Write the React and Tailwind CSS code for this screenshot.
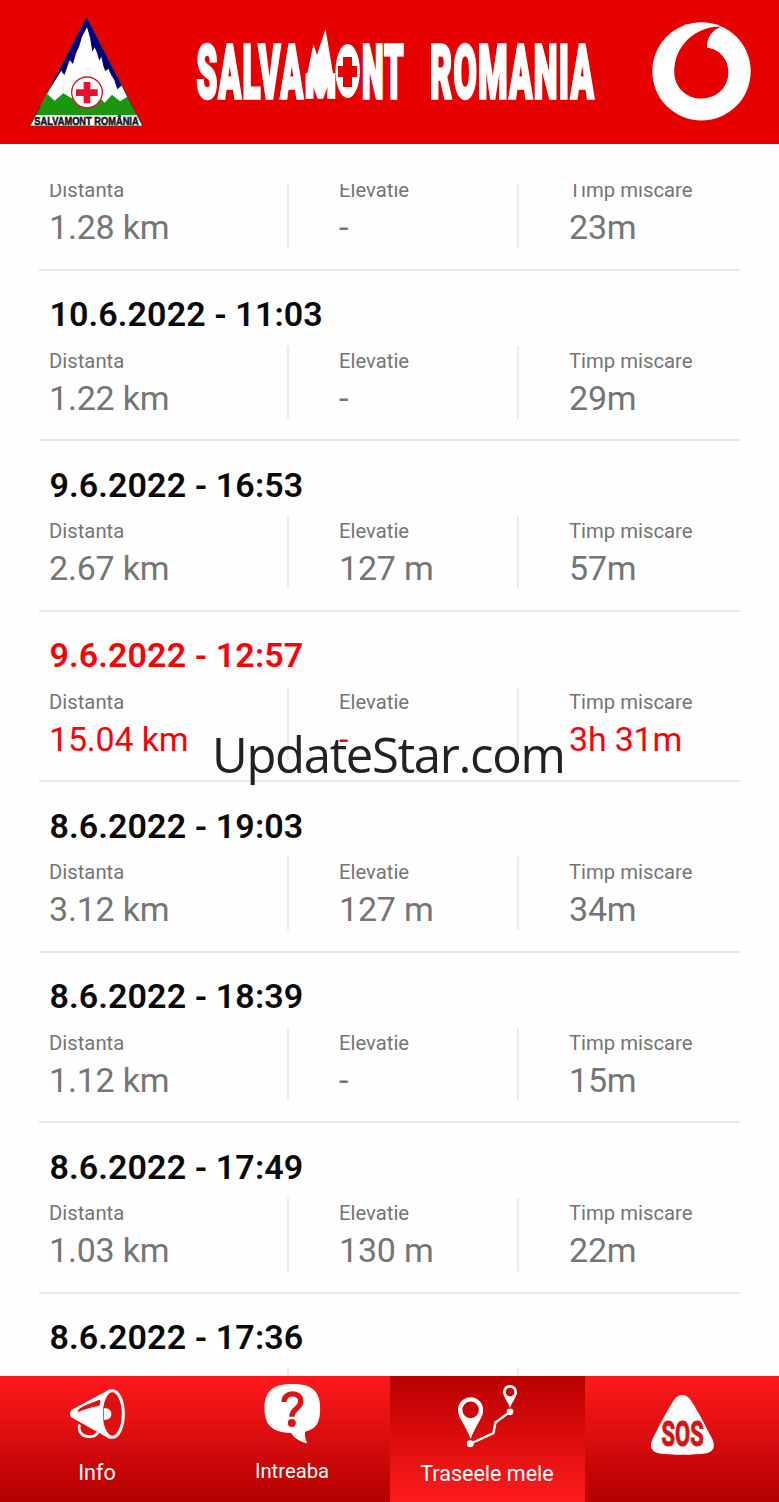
import clsx from "clsx";

// ─────────────────────────────────────
// DATA
// ─────────────────────────────────────
const tracks = [
  { id: 1, distance: "1.28 km", elevation: "-", time: "23m" },
  { id: 2, date: "10.6.2022 - 11:03", distance: "1.22 km", elevation: "-", time: "29m" },
  { id: 3, date: "9.6.2022 - 16:53", distance: "2.67 km", elevation: "127 m", time: "57m" },
  { id: 4, date: "9.6.2022 - 12:57", distance: "15.04 km", elevation: "-", time: "3h 31m", highlight: true },
  { id: 5, date: "8.6.2022 - 19:03", distance: "3.12 km", elevation: "127 m", time: "34m" },
  { id: 6, date: "8.6.2022 - 18:39", distance: "1.12 km", elevation: "-", time: "15m" },
  { id: 7, date: "8.6.2022 - 17:49", distance: "1.03 km", elevation: "130 m", time: "22m" },
  { id: 8, date: "8.6.2022 - 17:36" },
];

// ─────────────────────────────────────
// LOGOS
// ─────────────────────────────────────
function SalvamontLogo() {
  return (
    <svg viewBox="84 45 351 342" className="w-[117px] h-[114px]">
      <path d="M260 52 L428 378 H90 Z" fill="#00007e" />
      <path
        d="M261 82 L270 112 L277 155 L284 142 L291 158 L298 182 L304 170 L310 198 L316 214 L325 206 L334 226 L343 240 L352 268 L366 256 L382 290 L378 320 H120 L142 278 L184 212 L193 226 L202 200 L209 180 L219 192 L228 160 L238 138 L246 110 Z"
        fill="#fff"
      />
      <path d="M142 282 L164 302 L190 280 L214 294 H300 L314 308 L336 284 L360 304 L382 290 L412 346 H107 Z" fill="#1a960f" />
      <path d="M107 345 H411 L428 378 H90 Z" fill="#fff" />
      <path d="M260 52 L428 378 H90 Z" fill="none" stroke="#3c3c3c" strokeWidth="2.5" />
      <circle cx="261" cy="277" r="46" fill="#fff" stroke="#e0102c" strokeWidth="4" />
      <path d="M251 246 H271 V268 H293 V288 H271 V310 H251 V288 H228 V268 H251 Z" fill="#e8102a" />
      <text
        x="103"
        y="375"
        textLength="313"
        lengthAdjust="spacingAndGlyphs"
        fill="#151515"
        stroke="#151515"
        strokeWidth="1.6"
        className="font-['Liberation_Sans',sans-serif] font-bold text-[31px]"
      >
        SALVAMONT ROMÂNIA
      </text>
    </svg>
  );
}

function Wordmark() {
  return (
    <svg
      viewBox="192 24 406 84"
      className="w-[406px] h-[84px] font-['Roboto',sans-serif] font-black text-[74px]"
      fill="#fff"
      stroke="#fff"
      strokeWidth="3.5"
    >
      <text x="196.5" y="97.5" textLength="108" lengthAdjust="spacingAndGlyphs" className="tracking-[3px]">SALVA</text>
      <text x="304.5" y="98" textLength="32" lengthAdjust="spacingAndGlyphs" strokeWidth="1.5" className="text-[34px]">M</text>
      <text x="337" y="96" textLength="22" lengthAdjust="spacingAndGlyphs" strokeWidth="1" className="text-[70px]">O</text>
      <text x="362" y="97.5" textLength="43" lengthAdjust="spacingAndGlyphs" className="tracking-[3px]">NT</text>
      <text x="430" y="97.5" textLength="165" lengthAdjust="spacingAndGlyphs" className="tracking-[3px]">ROMANIA</text>
      {/* mountain peaks over the M */}
      <path d="M305.5 82 L313.5 44 L317 55 L325.5 29 L334.5 82 L324 80 L319 92 L315 80 Z" stroke="none" />
      {/* medical cross inside the O */}
      <ellipse cx="347.7" cy="71" rx="12.2" ry="27" stroke="none" />
      <path d="M343 57 H352 V66 H357 V77 H352 V87 H343 V77 H338 V66 H343 Z" fill="#e60000" stroke="none" />
    </svg>
  );
}

function VodafoneLogo() {
  return (
    <svg viewBox="60 60 310 309" className="w-[103px] h-[103px]">
      <circle cx="215" cy="214" r="148" fill="#fff" />
      <path
        d="M275 80 C200 76 133 135 133 215 C133 262 170 296 215 296 C260 296 296 262 296 217 C296 177 268 147 232 143 C230 115 245 90 275 80 Z"
        fill="#e60000"
      />
    </svg>
  );
}

// ─────────────────────────────────────
// NAV ICONS
// ─────────────────────────────────────
function MegaphoneIcon() {
  return (
    <svg viewBox="204 84 171 156" className="w-[57px] h-[52px]" fill="none" stroke="#fff">
      <path d="M235 197 C232 218 246 230 264 230 C278 231 284 226 289 220" strokeWidth="8" strokeLinecap="round" />
      <path d="M328 87 L211 150 C206 156 206 167 211 172 L328 238 C300 200 300 124 328 87 Z" fill="#fff" stroke="none" />
      <path d="M231 156 C228 148 240 142 262 132 L296 119 C300 124 298 133 293 138 C270 140 250 150 231 156 Z" fill="#e01010" stroke="none" />
      <ellipse cx="334" cy="162" rx="33" ry="70" fill="#e01010" strokeWidth="9" />
      <path d="M308 145 C324 143 331 152 331 162 C331 172 324 181 308 179 Z" fill="#fff" stroke="none" />
    </svg>
  );
}

function QuestionIcon() {
  return (
    <svg viewBox="186 69 176 183" className="w-[59px] h-[61px]">
      <path
        d="M274 72 C330 72 357 92 357 145 C357 190 344 208 312 215 C310 227 313 238 318 250 C296 245 280 235 270 219 C214 218 190 196 190 145 C190 92 218 72 274 72 Z"
        fill="#fff"
      />
      <path d="M249 126 C247 94 299 94 299 124 C299 146 272 146 272 170" fill="none" stroke="#dc1414" strokeWidth="16" />
      <circle cx="272" cy="189" r="12" fill="#dc1414" />
    </svg>
  );
}

function RouteIcon() {
  return (
    <svg viewBox="228 72 184 193" className="w-[61px] h-[64px]">
      <path d="M268 252 L338 220 L344 188 L388 156" fill="none" stroke="#fff" strokeWidth="7" />
      <circle cx="268" cy="252" r="10.5" fill="#fff" />
      <circle cx="388" cy="156" r="10" fill="#fff" />
      <path
        fillRule="evenodd"
        fill="#fff"
        d="M269 112 C290 112 307 129 307 150 C307 176 284 196 269 238 C254 196 231 176 231 150 C231 129 248 112 269 112 Z M269 125 A25 25 0 1 0 269 175 A25 25 0 1 0 269 125 Z"
      />
      <path
        fillRule="evenodd"
        fill="#fff"
        d="M388 75 C400 75 409 84 409 96 C409 111 396 122 388 144 C380 122 367 111 367 96 C367 84 376 75 388 75 Z M388 83 A13 13 0 1 0 388 109 A13 13 0 1 0 388 83 Z"
      />
    </svg>
  );
}

function SosIcon() {
  return (
    <svg viewBox="204 101 200 187" className="w-[67px] h-[62px]">
      <path
        d="M303 104 C317 104 325 113 332 124 C352 155 375 200 394 237 C404 260 398 274 376 280 C335 286 272 286 232 280 C210 274 204 260 213 238 C232 200 254 156 275 124 C282 113 290 104 303 104 Z"
        fill="#fff"
      />
      <text
        x="241"
        y="257"
        textLength="127"
        lengthAdjust="spacingAndGlyphs"
        fill="#d61212"
        stroke="#d61212"
        strokeWidth="3"
        className="font-['Roboto',sans-serif] font-bold text-[107px]"
      >
        SOS
      </text>
    </svg>
  );
}

// ─────────────────────────────────────
// TRACK LIST
// ─────────────────────────────────────
function Stat({ label, value, highlight, className }) {
  return (
    <div className={clsx("h-[73px] pt-[3px]", className)}>
      <div className="text-[20.3px] leading-[25px] text-[#757575]">{label}</div>
      <div className={clsx("mt-[4px] text-[34px] leading-[40px] tracking-[-0.2px]", highlight ? "text-[#fb0007]" : "text-[#757575]")}>
        {value}
      </div>
    </div>
  );
}

function TrackRow({ track }) {
  const { date, distance, elevation, time, highlight } = track;
  return (
    <div className="h-[170.5px] shrink-0 border-b-2 border-[#e8e8e8] pt-[23.5px]">
      <div
        className={clsx(
          "h-[40px] pl-[10.5px] text-[34px] leading-[40px] font-semibold tracking-[0.1px]",
          highlight ? "text-[#fb0007]" : "text-[#0a0a0a]"
        )}
      >
        {date}
      </div>
      <div className="mt-[11.5px] flex">
        <Stat label="Distanta" value={distance} highlight={highlight} className="w-[250px] pl-[10px] border-r-2 border-[#ebebeb]" />
        <Stat label="Elevatie" value={elevation} highlight={highlight} className="w-[230px] pl-[50px] border-r-2 border-[#ebebeb]" />
        <Stat label="Timp miscare" value={time} highlight={highlight} className="pl-[50px]" />
      </div>
    </div>
  );
}

function NavItem({ label, active, className, children }) {
  return (
    <div
      className={clsx(
        "flex flex-1 flex-col items-center leading-[25px] text-white",
        active ? "bg-linear-to-b from-[#b90000] to-[#ff1a1c]" : "bg-linear-to-b from-[#ff1a1c] to-[#b40000]",
        className
      )}
    >
      {children}
      {label && <div className="mt-auto">{label}</div>}
    </div>
  );
}

export default function App() {
  return (
    <div className="relative flex h-[1502px] w-[779px] flex-col overflow-hidden bg-[#fefefe] font-['Roboto',sans-serif]">
      {/* ── HEADER ── */}
      <header className="flex h-[144px] shrink-0 items-start bg-[#e60000] pl-[28px]">
        <div className="mt-[15px]"><SalvamontLogo /></div>
        <div className="mt-[24px] ml-[47px]"><Wordmark /></div>
        <div className="mt-[20px] ml-[52px]"><VodafoneLogo /></div>
      </header>

      {/* ── TRACKS ── */}
      <main className="mt-[40px] flex h-[1192px] shrink-0 flex-col overflow-hidden px-[39px]">
        <div className="-mt-[84px] flex flex-col">
          {tracks.map((track) => (
            <TrackRow key={track.id} track={track} />
          ))}
        </div>
      </main>

      {/* ── BOTTOM NAV ── */}
      <nav className="flex h-[126px] shrink-0">
        <NavItem label="Info" className="pt-[12px] pr-[1px] pb-[17px] text-[21.5px]"><MegaphoneIcon /></NavItem>
        <NavItem label="Intreaba" className="pt-[7px] pr-[1px] pb-[18px] text-[20.3px]"><QuestionIcon /></NavItem>
        <NavItem label="Traseele mele" active className="pt-[8px] pr-[1px] pb-[16px] text-[21.5px]"><RouteIcon /></NavItem>
        <NavItem className="pt-[18px]"><SosIcon /></NavItem>
      </nav>

      <div className="absolute top-[722px] left-[212px] font-['Open_Sans',sans-serif] text-[49px] leading-[65px] tracking-[-1.3px] whitespace-nowrap text-[#222]">
        UpdateStar.com
      </div>
    </div>
  );
}
